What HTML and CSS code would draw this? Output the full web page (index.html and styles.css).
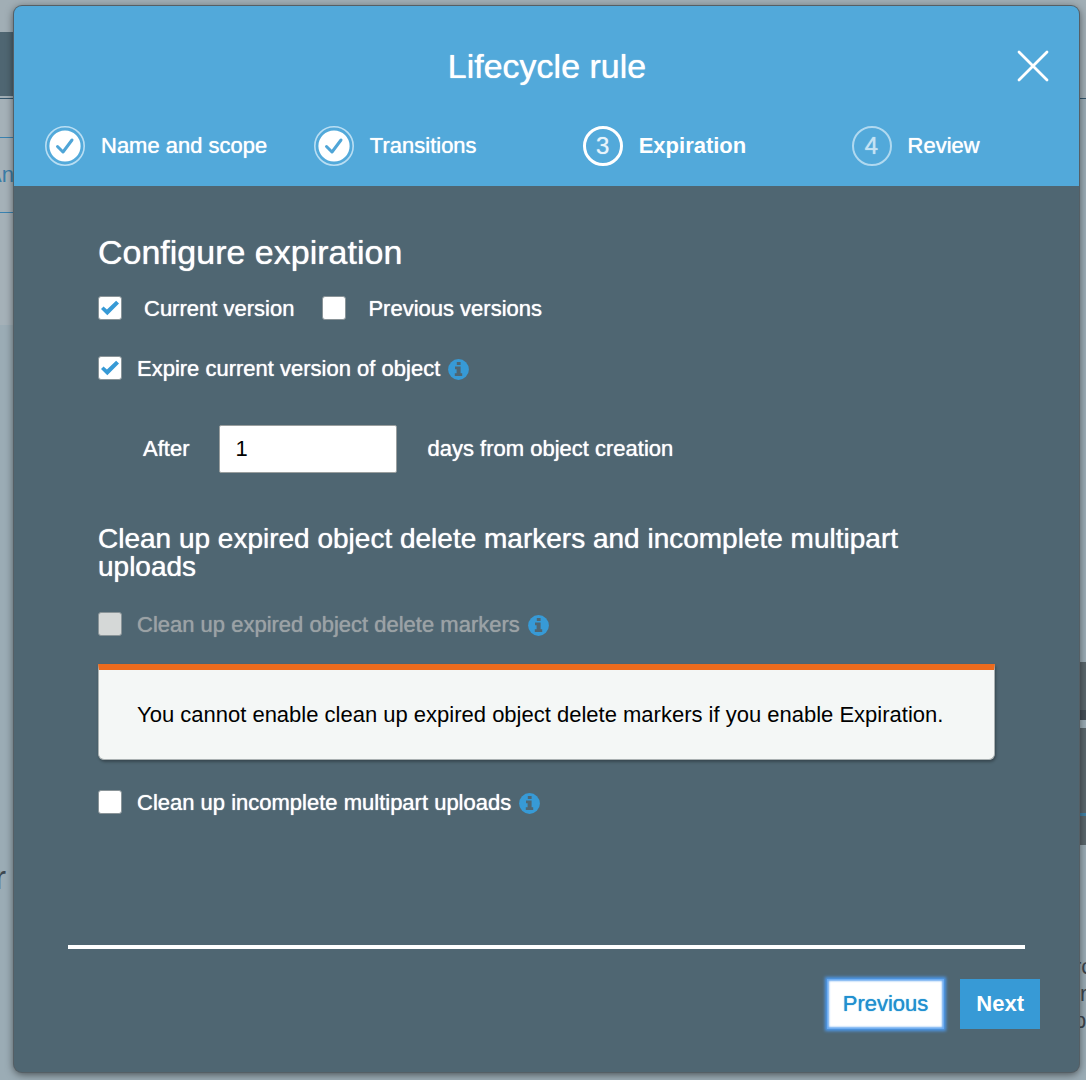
FILE: index.html
```html
<!DOCTYPE html>
<html lang="en">
<head>
<meta charset="utf-8">
<meta name="viewport" content="width=device-width, initial-scale=1">
<title>Lifecycle rule</title>
<link rel="stylesheet" href="styles.css">
</head>
<body>
<svg class="sprite" aria-hidden="true">
  <symbol id="info" viewBox="0 0 21 21">
    <circle cx="10.500" cy="10.500" r="10.400" fill="#379ad6"/>
    <path fill="#4f6672" d="M8.800 3h3.800v3H8.800zM7 7.400h5.600v6.800h1.600v2.800H6.800v-2.800h1.800v-4H7z"/>
  </symbol>
  <symbol id="done" viewBox="0 0 40 40">
    <circle cx="20" cy="20" r="19.200" fill="none" stroke="#b9def3" stroke-width="1.600"/>
    <circle cx="20" cy="20" r="15.600" fill="#fff"/>
    <path d="M12.500 20.500l5.500 5.500 9-12" fill="none" stroke="#4fa5d7" stroke-width="3" stroke-linecap="round" stroke-linejoin="round"/>
  </symbol>
</svg>

<div class="page" aria-hidden="true">
  <div class="page-top"></div>
  <div class="page-nav"></div>
  <div class="page-tabs">An</div>
  <div class="page-strip"></div>
  <div class="page-main">
    <div class="page-word">r</div>
    <div class="page-side">
      <div class="thumb thumb-small"></div>
      <div class="thumb thumb-chart"></div>
      <p>rc<br>&nbsp;r<br>p</p>
    </div>
  </div>
</div>

<main class="modal" role="dialog" aria-labelledby="title">
  <header class="modal-header">
    <div class="title-row">
      <h1 id="title">Lifecycle rule</h1>
      <button class="close" type="button" aria-label="Close">
        <svg width="32" height="32" viewBox="0 0 32 32"><path d="M2 2l28 28M30 2L2 30" stroke="#fff" stroke-width="2.800" stroke-linecap="round"/></svg>
      </button>
    </div>
    <ol class="steps">
      <li class="step"><svg class="step-done"><use href="#done"/></svg>Name and scope</li>
      <li class="step"><svg class="step-done"><use href="#done"/></svg>Transitions</li>
      <li class="step current" aria-current="step"><span class="step-number">3</span>Expiration</li>
      <li class="step"><span class="step-number">4</span>Review</li>
    </ol>
  </header>

  <form class="modal-form">
    <section class="modal-body">
      <h2>Configure expiration</h2>
      <div class="versions">
        <label class="check wide"><input type="checkbox" checked>Current version</label>
        <label class="check wide"><input type="checkbox">Previous versions</label>
      </div>
      <div class="option">
        <label class="check"><input type="checkbox" checked>Expire current version of object</label>
        <svg class="info"><use href="#info"/></svg>
      </div>
      <div class="days">
        <label for="days">After</label>
        <input id="days" type="text" value="1">
        <span>days from object creation</span>
      </div>
      <h3>Clean up expired object delete markers and incomplete multipart uploads</h3>
      <div class="option">
        <label class="check disabled"><input type="checkbox" disabled>Clean up expired object delete markers</label>
        <svg class="info"><use href="#info"/></svg>
      </div>
      <p class="alert">You cannot enable clean up expired object delete markers if you enable Expiration.</p>
      <div class="option">
        <label class="check"><input type="checkbox">Clean up incomplete multipart uploads</label>
        <svg class="info"><use href="#info"/></svg>
      </div>
    </section>
    <footer class="modal-footer">
      <button class="button previous" type="button">Previous</button>
      <button class="button primary" type="button">Next</button>
    </footer>
  </form>
</main>
</body>
</html>
```

FILE: styles.css
```css
* {
  box-sizing: border-box;
}

body {
  margin: 0;
  min-height: 100vh;
  padding: 6px 7px 8px 14px;
  display: flex;
  position: relative;
  background: #9bacb5;
  color: #fff;
  font: 22px/26px "Liberation Sans", Arial, sans-serif;
}

h1, h2, h3, p, ol {
  margin: 0;
  padding: 0;
  font-weight: 400;
}

.sprite {
  position: absolute;
  width: 0;
  height: 0;
}

/* Dimmed page behind the dialog */
.page {
  position: absolute;
  inset: 0;
  overflow: hidden;
  display: flex;
  flex-direction: column;
}

.page-top {
  height: 99px;
  padding-top: 32px;
  background: #a1aeb5;
  border-bottom: 1px solid #34566c;
}

.page-top::before {
  content: "";
  display: block;
  width: 50%;
  height: 64px;
  background: #4f6672;
}

.page-nav {
  width: 50%;
  height: 39px;
  background: #a5b1b8;
  border-bottom: 1px solid #3a82b0;
}

.page-tabs {
  width: 14px;
  height: 75px;
  background: #a5b1b8;
  border-bottom: 1px solid #3a82b0;
  color: #3a7ca6;
  display: flex;
  align-items: center;
  justify-content: flex-end;
}

.page-strip {
  width: 50%;
  height: 112px;
  background: #a5b1b8;
}

.page-main {
  flex: 1;
  display: flex;
  justify-content: space-between;
  color: #3d4750;
}

.page-word {
  width: 6px;
  margin-top: 532px;
  display: flex;
  justify-content: flex-end;
  font-size: 34px;
  line-height: 40px;
}

.page-side {
  width: 12px;
  margin-top: 337px;
}

.page-side p {
  margin-top: 108px;
  line-height: 27px;
}

.thumb {
  height: 117px;
  background: #5a666c;
}

.thumb-small {
  height: 58px;
  margin-bottom: 8px;
  border-bottom: 10px solid #454f57;
}

.thumb-chart {
  display: flex;
  align-items: flex-end;
  justify-content: flex-end;
  padding-bottom: 29px;
}

.thumb-chart::after {
  content: "";
  width: 6px;
  height: 3px;
  background: #3f7fa3;
}

/* Dialog */
.modal {
  position: relative;
  flex: 1;
  display: flex;
  flex-direction: column;
  border-radius: 8px;
  background: #4f6672;
  box-shadow: 0 0 0 1px #555f65, 0 2px 8px rgba(0, 0, 0, 0.6);
}

.modal-header {
  padding: 30px 0 20px 31px;
  border-radius: 8px 8px 0 0;
  background: #52a9da;
}

.title-row {
  display: grid;
  grid-template-columns: 1fr auto 1fr;
  align-items: center;
  margin: 0 30px 30px 0;
  height: 60px;
}

h1 {
  grid-column: 2;
  font-size: 34px;
  line-height: 40px;
  text-shadow: 0 0 1px #fff;
}

.close {
  justify-self: end;
  width: 32px;
  height: 32px;
  padding: 0;
  border: 0;
  background: none;
}

.close svg {
  display: block;
}

.steps {
  display: grid;
  grid-template-columns: repeat(3, 26fr) 22fr;
  list-style: none;
}

.step {
  display: flex;
  align-items: center;
  gap: 16px;
  text-shadow: 0 0 1px #fff;
}

.step-done,
.step-number {
  width: 40px;
  height: 40px;
}

.step-number {
  display: grid;
  place-items: center;
  border: 2px solid #b0d9f0;
  border-radius: 50%;
  color: #c5e3f4;
  font-size: 24px;
  font-weight: 400;
  text-shadow: 0 0 1px #c5e3f4;
}

.current {
  font-weight: 700;
  text-shadow: none;
}

.current .step-number {
  border: 3px solid #fff;
  color: #e8f4fb;
}

.modal-form {
  flex: 1;
  display: flex;
  flex-direction: column;
}

.modal-body {
  flex: 1;
  padding: 46px 84px 48px;
}

h2 {
  font-size: 34px;
  line-height: 40px;
  text-shadow: 0 0 1px #fff;
}

h3 {
  margin: 52px 0 31px;
  font-size: 28px;
  line-height: 28px;
  text-shadow: 0 0 1px #fff;
}

.versions {
  display: flex;
  gap: 28px;
  margin: 24px 0 34px;
}

.option {
  display: flex;
  align-items: center;
  gap: 8px;
}

.check {
  display: flex;
  align-items: flex-start;
  gap: 15px;
  text-shadow: 0 0 1px #fff;
}

.wide {
  gap: 22px;
}

.disabled {
  color: #9ba2a5;
  text-shadow: 0 0 1px #9ba2a5;
}

.check input {
  appearance: none;
  display: grid;
  place-items: center;
  width: 24px;
  height: 24px;
  margin: 0;
  border: 1px solid #8a9498;
  border-radius: 3px;
  background: #fff;
}

.check input:checked::before {
  content: "";
  width: 18px;
  height: 16px;
  background: #379ad6;
  clip-path: polygon(0 56%, 14% 40%, 33% 60%, 84% 4%, 100% 22%, 35% 96%);
}

.check input:disabled {
  background: #d5d8d7;
}

.info {
  width: 21px;
  height: 21px;
}

.days {
  display: flex;
  align-items: center;
  gap: 30px;
  margin: 43px 0 0 45px;
  text-shadow: 0 0 1px #fff;
}

.days input {
  width: 178px;
  height: 48px;
  padding: 0 15px;
  border: 1px solid #9a9f9f;
  border-radius: 2px;
  background: #fff;
  color: #000;
  font: inherit;
}

.alert {
  margin: 26px 0 30px;
  padding: 32px 38px 31px;
  border: 1px solid #aab1b2;
  border-top: 6px solid #ec6b1e;
  border-radius: 0 0 6px 6px;
  background: #f4f7f6;
  box-shadow: 1px 2px 3px rgba(0, 0, 0, 0.3);
  color: #000;
}

.modal-footer {
  display: flex;
  justify-content: flex-end;
  gap: 16px;
  margin: 0 54px;
  padding: 30px 0 43px;
  border-top: 4px solid #fff;
}

.button {
  height: 50px;
  padding: 0 16px;
  border: 0;
  background: #379ad6;
  color: #fff;
  font: inherit;
  font-weight: 700;
}

.primary {
  margin-right: -15px;
}

.previous {
  background: #fff;
  color: #2190d0;
  font-weight: 400;
  text-shadow: 0 0 1px #2190d0;
  box-shadow: inset 0 0 2px 2px #6aaaf0, 0 0 3px 2px #4c98ec;
}
```
